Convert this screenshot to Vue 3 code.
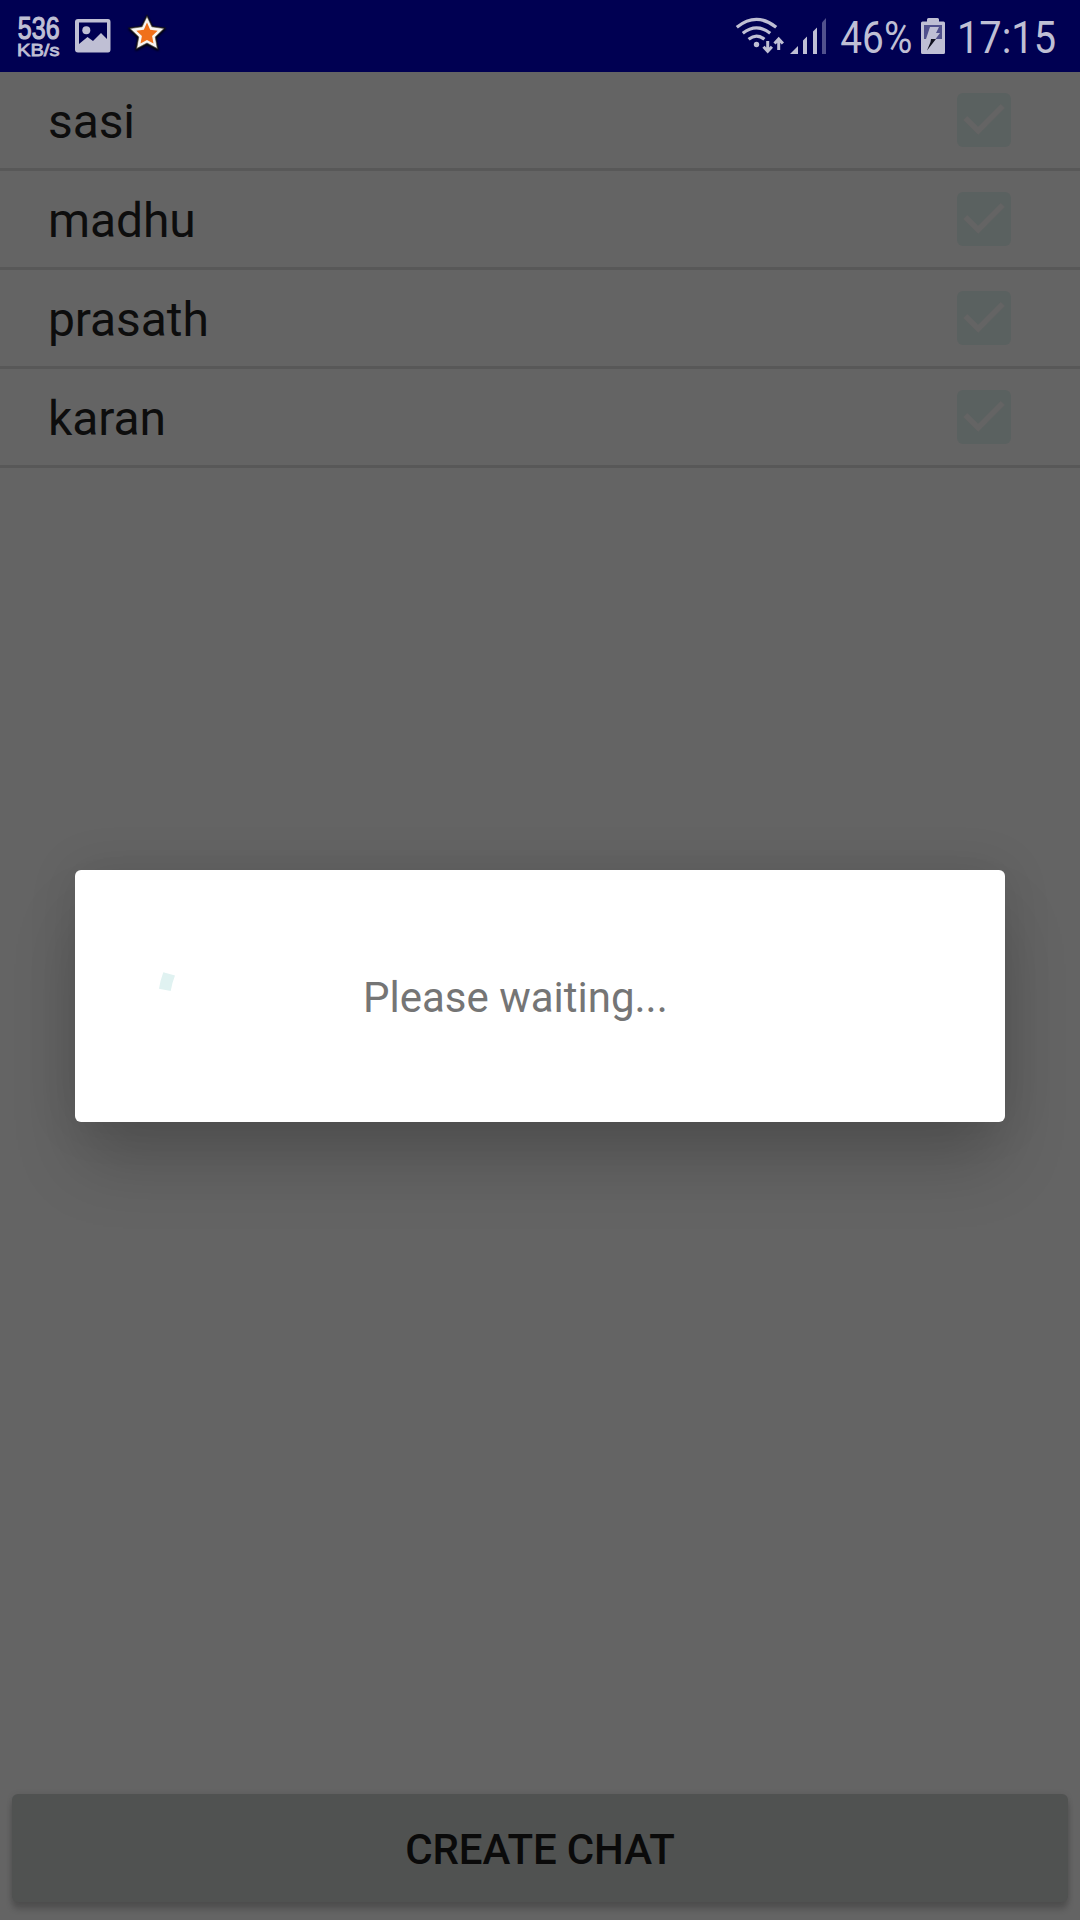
<script setup>
const contacts = ['sasi', 'madhu', 'prasath', 'karan']
</script>

<template>
  <div class="screen">
    <header class="status">
      <svg width="70" height="72" viewBox="0 0 70 72">
        <g fill="#bfbfd4" stroke="#bfbfd4" font-family="Liberation Sans, sans-serif">
          <text x="17.800" y="38.800" font-size="31.500" stroke-width="1.200" textLength="41.800" lengthAdjust="spacingAndGlyphs">536</text>
          <text x="17" y="55.800" font-size="17" stroke-width="0.800" textLength="42.500" lengthAdjust="spacingAndGlyphs">KB/s</text>
        </g>
      </svg>
      <svg width="50" height="72" viewBox="70 0 50 72">
        <path fill="#bfbfd4" fill-rule="evenodd" d="M78 19h30q2.500 0 2.500 3v27.500q0 3-2.500 3h-30q-3 0-3-3v-27.500q0-3 3-3zM79 22.500v21.500l8.500-7 5.500 4 8-8 6 6v-16.500z" />
        <circle cx="86.300" cy="30.200" r="4" fill="#bfbfd4" />
      </svg>
      <svg width="60" height="72" viewBox="120 0 60 72">
        <path class="star-shade" d="M147 16.500l4.900 10.300 12.100 1.700-8.800 8.400 2.100 11.600-10.300-5.500-10.300 5.500 2.100-11.600-8.800-8.400 12.100-1.700z" />
        <path fill="#f7f5f2" stroke="#4b443e" stroke-width="0.600" d="M147 16.500l4.900 10.300 12.100 1.700-8.800 8.400 2.100 11.600-10.300-5.500-10.300 5.500 2.100-11.600-8.800-8.400 12.100-1.700z" />
        <path fill="#f0701a" d="M147 22.500l3.200 7.200 7.500 1-5.600 5.300 1.400 7.600-6.500-3.700-6.500 3.700 1.400-7.600-5.600-5.300 7.500-1z" />
      </svg>
      <div class="grow"></div>
      <svg width="60" height="72" viewBox="730 0 60 72" fill="none" stroke="#bfbfd4">
        <path stroke-width="3.300" d="M736.800 27.200Q756.500 11.500 776.200 27.200M742.800 33.200Q756.500 22.500 770.200 33.200M748.600 39.200Q756.500 33 764.400 39.200" />
        <circle cx="756.500" cy="44.500" r="2.700" fill="#bfbfd4" stroke="none" />
        <path stroke-width="3" d="M767.700 41v10M763.500 46.800l4.200 4.600 4.200-4.600M778.700 50v-10M774.500 43.500l4.200-4.600 4.200 4.600" />
      </svg>
      <svg width="48" height="72" viewBox="790 0 48 72" fill="#bfbfd4">
        <path d="M790 54l8-8v8zM803 54v-13.500l4-4v17.500zM813 54v-22.500l4-4v26.500z" />
        <path fill="#51518d" d="M822 54v-31.500l4-4.500v36z" />
      </svg>
      <svg class="text" width="78" height="72" viewBox="838 0 78 72">
        <text class="clock" x="840.300" y="53" textLength="72" lengthAdjust="spacingAndGlyphs">46%</text>
      </svg>
      <svg width="34" height="72" viewBox="916 0 34 72">
        <path fill="#bfbfd4" d="M927 21.500v-2q0-1.500 1.500-1.500h9q1.500 0 1.500 1.500v2h4.500q1.500 0 1.500 1.500v29.500q0 1.500-1.500 1.500h-21q-1.500 0-1.500-1.500v-29.500q0-1.500 1.500-1.500z" />
        <path fill="#51518d" d="M924 25h18v14h-18z" />
        <path fill="#bfbfd4" d="M930 27h9l-3 6h4l-4.500 6h-9.500z" />
        <path fill="#10101f" d="M931 39h5l-9 11.500 3.500-8.500z" />
      </svg>
      <svg class="text" width="130" height="72" viewBox="950 0 130 72">
        <text class="clock" x="957" y="53" textLength="99" lengthAdjust="spacingAndGlyphs">17:15</text>
      </svg>
    </header>

    <ul class="list">
      <li v-for="name in contacts" :key="name" class="row">
        <span class="name">{{ name }}</span>
        <svg class="check" width="54" height="54" viewBox="0 0 54 54">
          <rect width="54" height="54" rx="6" fill="#5a6160" />
          <path d="M8.300 25L21.200 37.700L45.800 13" fill="none" stroke="#646464" stroke-width="5.600" />
        </svg>
      </li>
    </ul>

    <button class="create">CREATE CHAT</button>

    <div class="dialog">
      <svg class="spinner" width="144" height="144" viewBox="0 0 144 144">
        <path d="M17.700 67L6 64.800Q7.200 56.500 10.300 48.200L22 51.500Q19 59 17.700 67z" fill="#e0f2f1" />
      </svg>
      <span class="message">Please waiting...</span>
    </div>
  </div>
</template>

<style>
body {
  background: #646464;
}
</style>

<style scoped>
.screen {
  position: relative;
  display: flex;
  flex-direction: column;
  width: 1080px;
  height: 1920px;
  overflow: hidden;
  background: #646464;
  font-family: Roboto, sans-serif;
}

.status {
  display: flex;
  flex: none;
  height: 72px;
  background: #000052;
}

.status svg {
  flex: none;
}

.status .text {
  overflow: visible;
}

.grow {
  flex: 1;
}

.clock {
  fill: #bfbfd4;
  font: 45px Roboto, sans-serif;
}

.star-shade {
  fill: #000;
  stroke: #15151a;
  stroke-width: 2px;
  filter: drop-shadow(0 1px 1px #000);
}

.list {
  flex: 1;
  margin: 0;
  padding: 0;
  list-style: none;
}

.row {
  display: flex;
  justify-content: space-between;
  box-sizing: border-box;
  height: 99px;
  padding: 0 69px 0 48px;
  border-bottom: 3px solid #585858;
}

.name {
  padding-top: 22px;
  color: #0d0d0d;
  font-size: 48px;
  line-height: 56px;
  letter-spacing: -0.1px;
}

.check {
  margin-top: 21px;
}

.create {
  height: 108px;
  margin: 0 12px 18px;
  padding: 2px 0 0;
  border: 0;
  border-radius: 6px;
  background: #505251;
  box-shadow: 0 7px 6px rgba(0, 0, 0, 0.2), 0 0 6px rgba(0, 0, 0, 0.08);
  color: #0a0a0a;
  font: 500 42px Roboto, sans-serif;
  letter-spacing: -0.15px;
}

.dialog {
  position: absolute;
  top: 870px;
  left: 75px;
  display: flex;
  align-items: center;
  box-sizing: border-box;
  width: 930px;
  height: 252px;
  padding-left: 78px;
  border-radius: 6px;
  background: #fff;
  box-shadow: 0 46px 64px -6px rgba(0, 0, 0, 0.18), 0 0 50px rgba(0, 0, 0, 0.11);
}

.message {
  margin-left: 66px;
  padding-top: 2px;
  color: #757575;
  font-size: 42px;
}
</style>
